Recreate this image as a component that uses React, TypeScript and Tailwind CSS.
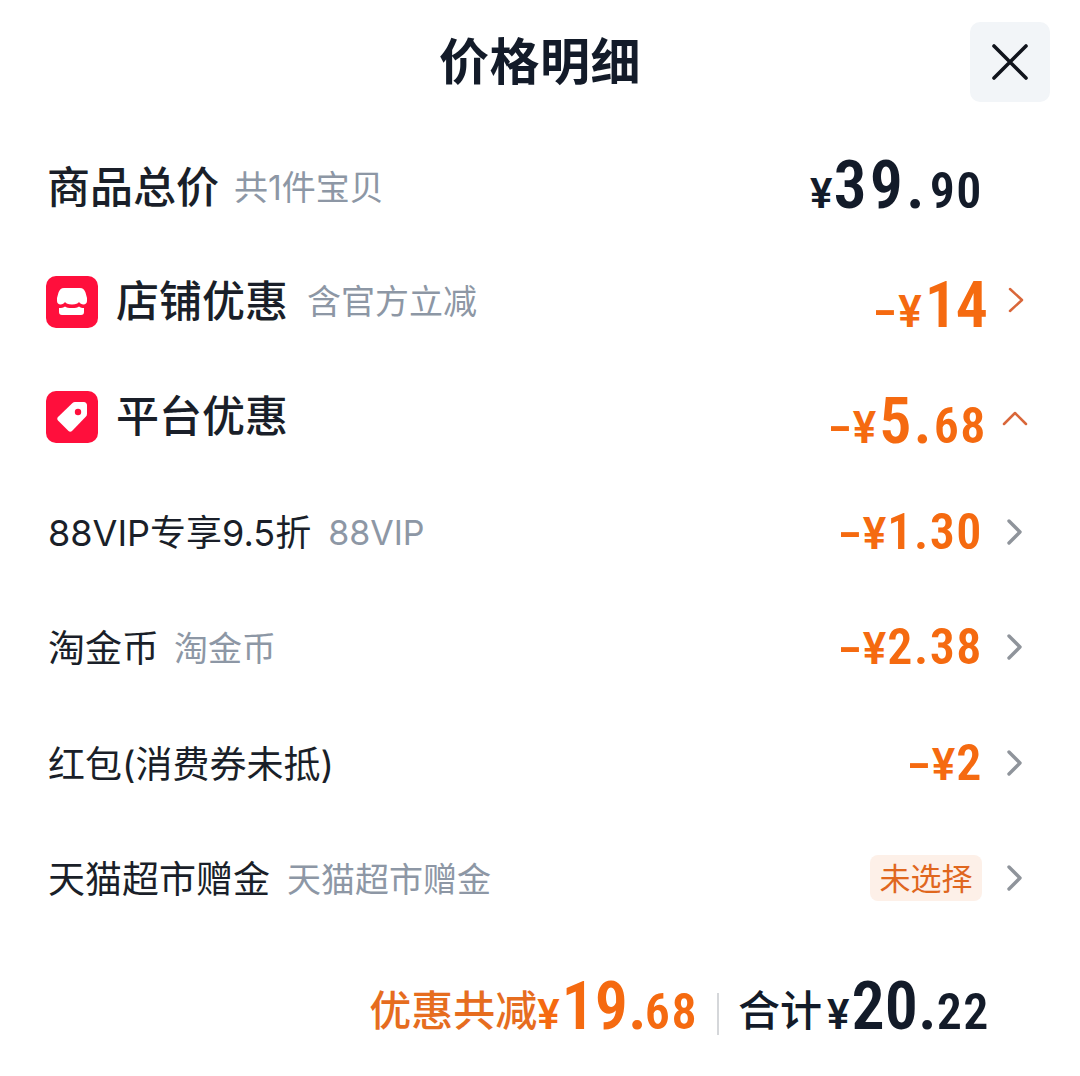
const CJK = "font-['Inter','Noto_Sans_CJK_SC',sans-serif]";
const NUM = "font-['Roboto','Noto_Sans_CJK_SC',sans-serif] [font-stretch:75%]";
const YEN = "[font-stretch:100%]";

function Chevron({ color = "#8f949b" }: { color?: string }) {
  return (
    <svg width="18" height="28" viewBox="0 0 18 28" fill="none" className="block">
      <path d="M4 3 L15 14 L4 25" stroke={color} strokeWidth="3.400" strokeLinecap="round" strokeLinejoin="round" />
    </svg>
  );
}

function ChevronUp() {
  return (
    <svg width="28" height="18" viewBox="0 0 28 18" fill="none" className="block">
      <path d="M3 15 L14 4 L25 15" stroke="#d9673a" strokeWidth="2.500" strokeLinecap="round" strokeLinejoin="round" />
    </svg>
  );
}

function StoreIcon() {
  return (
    <svg width="52" height="52" viewBox="0 0 52 52" className="block shrink-0">
      <rect width="52" height="52" rx="10" fill="#ff0f3c" />
      <path d="M18 12h16c3 0 4.500 2 5.500 4.500l1.500 5.500v3c0 2-1.500 3.500-3.500 3.500-2 0-3.500-1-4.500-2.500-1 1.500-3 2.500-7 2.500s-6-1-7-2.500c-1 1.500-2.500 2.500-4.500 2.500-2 0-3.500-1.500-3.500-3.500v-3l1.500-5.500C13.500 14 15 12 18 12z" fill="#fff" />
      <path d="M13 32c2.500 0 4.500-.5 6-1.500 1.500 1 3.500 1.500 7 1.500s5.500-.5 7-1.500c1.500 1 3 1.500 5 1.500v4c0 2-1 3-3 3H16c-2 0-3-1-3-3z" fill="#fff" />
    </svg>
  );
}

function TagIcon() {
  return (
    <svg width="52" height="52" viewBox="0 0 52 52" className="block shrink-0">
      <rect width="52" height="52" rx="10" fill="#ff0f3c" />
      <path d="M29 11h9c1.500 0 3 1.500 3 3v9c0 1-.4 1.800-1 2.500L26 40c-1 1-2.500 1-3.500 0L12 29.500c-1-1-1-2.500 0-3.500L26.500 12c.7-.6 1.500-1 2.500-1z" fill="#fff" />
      <circle cx="32" cy="21" r="3.200" fill="#ff0f3c" />
    </svg>
  );
}

function Row({ children, h = "h-[116px]" }: { children: React.ReactNode; h?: string }) {
  return <div className={`flex items-center justify-between ${h}`}>{children}</div>;
}

function Price({ children, color, className = "" }: { children: React.ReactNode; color: string; className?: string }) {
  return (
    <div className={`${NUM} font-semibold flex items-baseline whitespace-nowrap leading-none ${color} ${className}`}>
      {children}
    </div>
  );
}

function Dash() {
  return <span className="inline-block text-[46px] w-[20px] text-center scale-x-[1.700] origin-center">-</span>;
}

function SubRow({
  label,
  sub,
  labelSize = "text-[37px]",
  gap = "gap-[17px]",
  children,
}: {
  label: string;
  sub?: string;
  labelSize?: string;
  gap?: string;
  children: React.ReactNode;
}) {
  return (
    <Row h="h-[115.5px]">
      <div className={`flex items-center ${gap} mt-[3px]`}>
        <span className={`${labelSize} leading-none text-[#1a1f29]`}>{label}</span>
        {sub && <span className="text-[34px] leading-none text-[#8d97a5]">{sub}</span>}
      </div>
      <div className="flex items-center">
        {children}
        <div className="w-[22px]" />
        <Chevron />
        <div className="w-[2px]" />
      </div>
    </Row>
  );
}

function Amount({ yen }: { yen: string }) {
  return (
    <Price color="text-[#f56a10]">
      <Dash />
      <span className={`${YEN} text-[44px] ml-[3px] mr-[1px]`}>¥</span>
      <span className="text-[50px] tracking-[1.500px]">{yen}</span>
    </Price>
  );
}

export default function App() {
  return (
    <div className={`${CJK} w-[1080px] h-[1076px] bg-white overflow-hidden pl-[48px] pr-[30px]`}>
      <header className="relative h-[128px] flex items-center justify-center">
        <h1 className="text-[50px] font-bold leading-none tracking-[0.5px] text-[#131b29] pb-[4px] mr-[18px]">价格明细</h1>
        <button className="absolute right-0 top-[22px] w-[80px] h-[80px] rounded-[10px] bg-[#f2f5f8] flex items-center justify-center">
          <svg width="38" height="38" viewBox="0 0 38 38" fill="none">
            <path d="M3 3 L35 35 M35 3 L3 35" stroke="#10141c" strokeWidth="3.600" strokeLinecap="round" />
          </svg>
        </button>
      </header>

      <Row h="h-[116px]">
        <div className="flex items-center gap-[15px] mt-[3px]">
          <span className="text-[43px] leading-none font-medium text-[#1a1f29] -ml-[1px]">商品总价</span>
          <span className="text-[34px] leading-none text-[#8d97a5]">共1件宝贝</span>
        </div>
        <div className="mr-[67px]">
          <Price color="text-[#131b29]">
            <span className={`${YEN} text-[42px] mr-[1px]`}>¥</span>
            <span className="text-[66px] tracking-[3px]">39.</span>
            <span className="text-[50px] ml-[2px] tracking-[1.500px]">90</span>
          </Price>
        </div>
      </Row>

      <Row h="h-[115px]">
        <div className="flex items-center -ml-[2px]">
          <StoreIcon />
          <span className="text-[43px] leading-none font-medium text-[#1a1f29] ml-[18px]">店铺优惠</span>
          <span className="text-[34px] leading-none text-[#8d97a5] ml-[19px]">含官方立减</span>
        </div>
        <div className="flex items-center mr-[25px]">
          <Price color="text-[#f56a10]" className="mt-[8px]">
            <Dash />
            <span className={`${YEN} text-[44px] ml-[3px] mr-[3px]`}>¥</span>
            <span className="text-[64px] -tracking-[1px]">14</span>
          </Price>
          <div className="w-[20px]" />
          <svg width="18" height="28" viewBox="0 0 18 28" fill="none" className="block -mt-[4px]">
            <path d="M3 3 L15 14 L3 25" stroke="#d9673a" strokeWidth="2.500" strokeLinecap="round" strokeLinejoin="round" />
          </svg>
        </div>
      </Row>

      <Row h="h-[115px]">
        <div className="flex items-center -ml-[2px]">
          <TagIcon />
          <span className="text-[43px] leading-none font-medium text-[#1a1f29] ml-[18px]">平台优惠</span>
        </div>
        <div className="flex items-center mr-[21px]">
          <Price color="text-[#f56a10]" className="mt-[10px]">
            <Dash />
            <span className={`${YEN} text-[44px] ml-[3px] mr-[3px]`}>¥</span>
            <span className="text-[64px] tracking-[2px]">5.</span>
            <span className="text-[50px] tracking-[1.500px]">68</span>
          </Price>
          <div className="w-[14px]" />
          <div className="mt-[2px]"><ChevronUp /></div>
        </div>
      </Row>

      <div className="pr-[25px]">
        <SubRow label="88VIP专享9.5折" labelSize="text-[36px]" sub="88VIP">
          <Amount yen="1.30" />
        </SubRow>
        <SubRow label="淘金币" gap="gap-[15px]" sub="淘金币">
          <Amount yen="2.38" />
        </SubRow>
        <SubRow label="红包(消费券未抵)">
          <Amount yen="2" />
        </SubRow>
        <SubRow label="天猫超市赠金" sub="天猫超市赠金">
          <span className="h-[46px] w-[112px] rounded-[8px] bg-[#fdf0e8] text-[#e0671e] text-[31px] leading-none flex items-center justify-center mr-[1px]">
            未选择
          </span>
        </SubRow>
      </div>

      <footer className="flex items-center justify-end h-[130px] pr-[60px] pt-[12px]">
        <span className="text-[42px] font-medium leading-none text-[#e66d1f] mt-[8px]">优惠共减</span>
        <Price color="text-[#f56a10]">
          <span className={`${YEN} text-[42px] mr-[2px]`}>¥</span>
          <span className="text-[66px]">19.</span>
          <span className="text-[50px] -ml-[2px] tracking-[1.500px]">68</span>
        </Price>
        <div className="w-[2px] h-[42px] bg-[#d5d7da] mx-[19px] mt-[14px]" />
        <span className="text-[42px] font-medium leading-none text-[#131b29] mt-[8px]">合计</span>
        <Price color="text-[#131b29]">
          <span className={`${YEN} text-[42px] ml-[5px] mr-[2px]`}>¥</span>
          <span className="text-[66px]">20.</span>
          <span className="text-[50px] tracking-[1.500px]">22</span>
        </Price>
      </footer>
    </div>
  );
}
